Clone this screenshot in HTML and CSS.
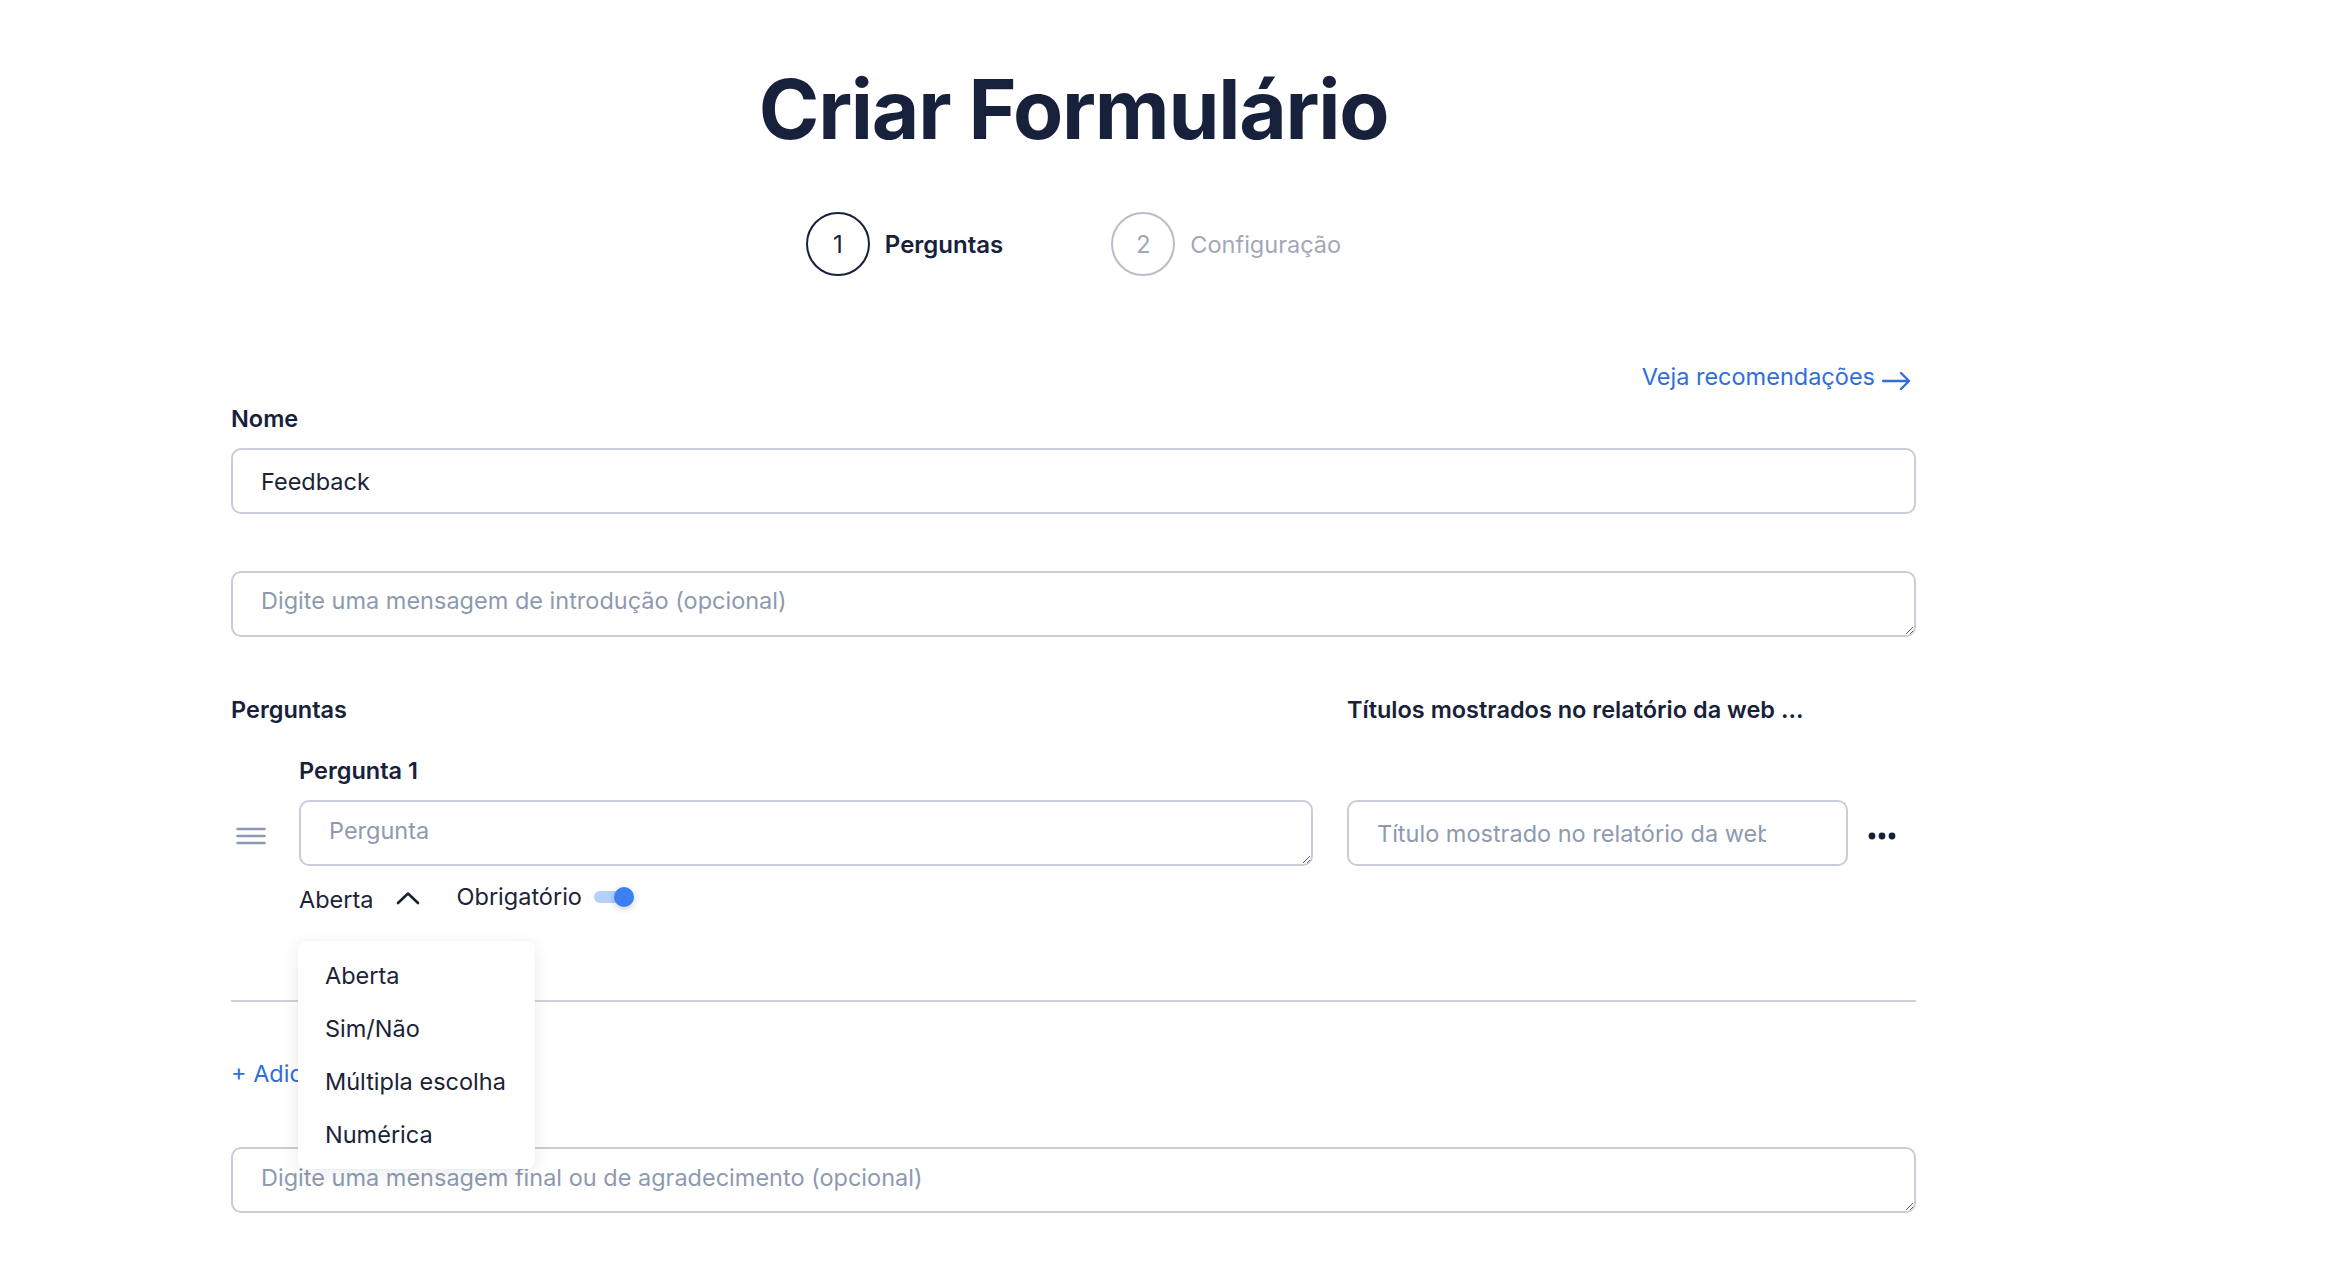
FILE: index.html
```html
<!DOCTYPE html>
<html lang="pt-BR">
<head>
<meta charset="utf-8">
<title>Criar Formulário</title>
<link rel="stylesheet" href="styles.css">
</head>
<body>
<div class="page">
  <h1 class="title">Criar Formulário</h1>

  <div class="steps">
    <div class="step step-active">
      <span class="step-num">1</span>
      <span class="step-label">Perguntas</span>
    </div>
    <div class="step step-idle">
      <span class="step-num">2</span>
      <span class="step-label">Configuração</span>
    </div>
  </div>

  <div class="reco-row">
    <a class="reco-link" href="#">Veja recomendações
      <svg class="reco-arrow" width="30" height="20" viewBox="0 0 30 20"><path d="M1 10H27M19 2L27 10L19 18" fill="none" stroke="currentColor" stroke-width="2.4" stroke-linecap="round" stroke-linejoin="round"/></svg>
    </a>
  </div>

  <label class="field-label">Nome</label>
  <input class="text-input" type="text" value="Feedback">

  <textarea class="text-area intro" rows="1" placeholder="Digite uma mensagem de introdução (opcional)"></textarea>

  <div class="questions">
    <div class="q-head">Perguntas</div>
    <div class="q-head q-head-titles">Títulos mostrados no relatório da web ...</div>

    <div class="q-label">Pergunta 1</div>

    <div class="q-handle">
      <svg width="30" height="20" viewBox="0 0 30 20"><path d="M1.5 3H28.5M1.5 10H28.5M1.5 17H28.5" stroke="#8d9ab0" stroke-width="2.6" stroke-linecap="round"/></svg>
    </div>
    <textarea class="text-area q-text" rows="1" placeholder="Pergunta"></textarea>
    <input class="text-input q-title" type="text" placeholder="Título mostrado no relatório da web">
    <div class="q-more">
      <svg width="30" height="10" viewBox="0 0 30 10"><circle cx="5" cy="5" r="3.4" fill="#18213a"/><circle cx="15" cy="5" r="3.4" fill="#18213a"/><circle cx="25" cy="5" r="3.4" fill="#18213a"/></svg>
    </div>

    <div class="q-options">
      <div class="type-select">
        <span class="type-value">Aberta</span>
        <svg class="chevron" width="24" height="14" viewBox="0 0 24 14"><path d="M2 12L12 2.5L22 12" fill="none" stroke="#18213a" stroke-width="2.6" stroke-linecap="round" stroke-linejoin="round"/></svg>
      </div>
      <div class="required">
        <span class="required-label">Obrigatório</span>
        <span class="toggle"><span class="toggle-track"></span><span class="toggle-knob"></span></span>
      </div>

      <ul class="type-menu">
        <li class="type-item">Aberta</li>
        <li class="type-item">Sim/Não</li>
        <li class="type-item">Múltipla escolha</li>
        <li class="type-item">Numérica</li>
      </ul>
    </div>
  </div>

  <hr class="divider">

  <a class="add-link" href="#">+ Adicionar pergunta</a>

  <textarea class="text-area final" rows="1" placeholder="Digite uma mensagem final ou de agradecimento (opcional)"></textarea>
</div>
</body>
</html>
```

FILE: styles.css
```css
* { box-sizing: border-box; }

html, body {
  margin: 0;
  padding: 0;
  background: #ffffff;
}

body {
  font-family: "Inter", "Noto Sans", sans-serif;
  color: #1b2337;
  font-size: 23.5px;
  line-height: 29px;
}

.page {
  width: 1685px;
  margin-left: 231px;
  padding-top: 60px;
  padding-bottom: 60px;
}

.title {
  margin: 0;
  font-size: 82px;
  line-height: 100px;
  font-weight: 700;
  color: #17213b;
  text-align: center;
  letter-spacing: -1.25px;
}

.steps {
  margin-top: 52px;
  display: flex;
  justify-content: center;
  gap: 108px;
  height: 64px;
}

.step {
  display: flex;
  align-items: center;
  gap: 15px;
}

.step-num {
  width: 64px;
  height: 64px;
  border-radius: 50%;
  display: flex;
  align-items: center;
  justify-content: center;
  font-size: 24px;
  font-weight: 400;
}

.step-label {
  font-size: 24px;
}

.step-active .step-num {
  border: 2px solid #17213b;
  color: #17213b;
}

.step-active .step-label {
  font-weight: 600;
  color: #17213b;
}

.step-idle .step-num {
  border: 2px solid #b8bdc9;
  color: #a2a8b6;
}

.step-idle .step-label {
  color: #a2a8b6;
  font-size: 23.5px;
}

.reco-row {
  margin-top: 86px;
  display: flex;
  justify-content: flex-end;
  padding-right: 4px;
}

.reco-link {
  display: flex;
  align-items: center;
  gap: 7px;
  color: #2f6edb;
  text-decoration: none;
}

.reco-arrow {
  transform: translateY(4px);
}

.field-label {
  display: block;
  margin-top: 13px;
  font-weight: 600;
  color: #18213a;
}

.text-input,
.text-area {
  display: block;
  width: 100%;
  height: 66px;
  border: 2px solid #c9cdd9;
  border-radius: 10px;
  font-family: "Inter", "Noto Sans", sans-serif;
  font-size: 23.5px;
  line-height: 29px;
  color: #1b2337;
  background: #ffffff;
  outline: none;
}

.text-input {
  margin-top: 15px;
  padding: 0 28px;
}

.text-area {
  padding: 14px 28px;
  resize: vertical;
  overflow: hidden;
}

.text-input::placeholder,
.text-area::placeholder {
  color: #8d9ab0;
  opacity: 1;
}

.intro {
  margin-top: 57px;
  padding-top: 13px;
}

.questions {
  margin-top: 58px;
  display: grid;
  grid-template-columns: 68px 1014px 34px 501px 68px;
  align-items: center;
}

.q-head {
  grid-row: 1;
  grid-column: 1 / 4;
  font-weight: 600;
  color: #18213a;
}

.q-head-titles {
  grid-column: 4 / 6;
}

.q-label {
  grid-row: 2;
  grid-column: 2;
  margin-top: 32px;
  font-weight: 600;
  color: #18213a;
}

.q-handle {
  grid-row: 3;
  grid-column: 1;
  margin-top: 21px;
  padding-left: 5px;
  display: flex;
}

.q-text {
  grid-row: 3;
  grid-column: 2;
  margin-top: 15px;
}

.q-title {
  grid-row: 3;
  grid-column: 4;
  padding-right: 80px;
}

.q-more {
  grid-row: 3;
  grid-column: 5;
  margin-top: 21px;
  padding-left: 19px;
  display: flex;
}

.q-options {
  grid-row: 4;
  grid-column: 2;
  margin-top: 19px;
  display: flex;
  align-items: center;
  position: relative;
}

.type-select {
  display: flex;
  align-items: center;
  gap: 22px;
}

.chevron {
  transform: translateY(-2px);
}

.required {
  display: flex;
  align-items: center;
  gap: 12px;
  margin-left: 37px;
  transform: translateY(-3px);
}

.toggle {
  position: relative;
  width: 42px;
  height: 22px;
  display: inline-block;
}

.toggle-track {
  position: absolute;
  left: 0;
  top: 5px;
  width: 34px;
  height: 12px;
  border-radius: 6px;
  background: #b4d1fa;
}

.toggle-knob {
  position: absolute;
  left: 20px;
  top: 1px;
  width: 20px;
  height: 20px;
  border-radius: 50%;
  background: #3a80f3;
  box-shadow: 0 2px 6px rgba(30, 50, 90, 0.25);
}

.type-menu {
  position: absolute;
  left: -1px;
  top: 56px;
  z-index: 5;
  margin: 0;
  padding: 8px 0;
  list-style: none;
  width: 237px;
  background: #ffffff;
  border-radius: 8px;
  box-shadow: 0 4px 18px rgba(30, 45, 80, 0.09), 0 0 2px rgba(30, 45, 80, 0.05);
}

.type-item {
  height: 53px;
  line-height: 53px;
  padding-left: 27px;
  color: #1b2337;
}

.divider {
  margin: 86px 0 0;
  border: 0;
  height: 2px;
  background: #cdd1dc;
}

.add-link {
  display: block;
  margin-top: 57px;
  color: #2f6edb;
  text-decoration: none;
}

.final {
  margin-top: 59px;
}
```
